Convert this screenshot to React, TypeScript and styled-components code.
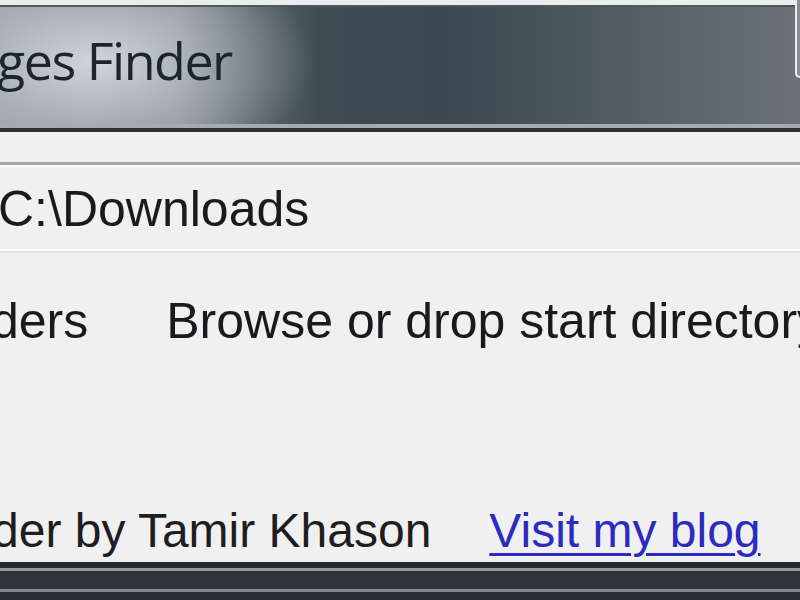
import styled, { createGlobalStyle } from 'styled-components';

const GlobalStyle = createGlobalStyle`
  html, body {
    margin: 0;
    padding: 0;
    background: #f0f0f0;
  }
`

const Window = styled.div`
  width: 800px;
  height: 600px;
  overflow: hidden;
  display: flex;
  flex-direction: column;
  background: #f0f0f0;
  font-family: "Liberation Sans", Arial, sans-serif;
  color: #1c1c1c;
`

const TopStrip = styled.div`
  height: 5px;
  background: #e9eded;
  border-bottom: 2px solid #4e585e;
`

// glass caption with the light glow behind the title
const TitleBar = styled.div`
  height: 117px;
  display: flex;
  justify-content: space-between;
  align-items: flex-start;
  background:
    radial-gradient(ellipse 220px 115px at 95px 55px, rgba(218, 224, 226, 0.85), rgba(186, 193, 197, 0.5) 55%, rgba(150, 158, 162, 0) 100%),
    linear-gradient(90deg, #959da2 0%, #8a9297 22%, #5a656c 32%, #404c54 40%, #3b4750 55%, #4f5a61 75%, #6b7378 100%);
  border-bottom: 4px solid #a5abae;
`

const TitleText = styled.h1`
  margin: 0;
  padding-top: 27px;
  margin-left: -3px;
  font-family: "Open Sans", "Noto Sans", sans-serif;
  font-weight: 400;
  font-size: 52px;
  letter-spacing: -1.5px;
  line-height: 1;
  color: #1b252b;
  white-space: nowrap;
`

const CaptionButton = styled.div`
  width: 3px;
  height: 76px;
  margin-top: -7px;
  border-left: 2px solid #e8eef0;
  border-bottom: 2px solid #e8eef0;
  border-bottom-left-radius: 8px;
  background: #848d92;
`

const TitleShadow = styled.div`
  height: 4px;
  background: #2b3236;
`

const Client = styled.div`
  flex: 1;
  display: flex;
  flex-direction: column;
  padding-top: 30px;
`

const PathBox = styled.div`
  border-top: 3px solid #a6a6a6;
  box-shadow: inset 0 2px 0 #ffffff, 0 2px 0 #e0e0e0;
  border-bottom: 2px solid #ffffff;
  padding: 19px 0 15px;
`

const BigText = styled.span<{ $offset?: number }>`
  display: block;
  margin-left: ${p => p.$offset ?? 0}px;
  font-size: 50px;
  line-height: 1;
  white-space: nowrap;
  color: #1a1a1e;
`

const OptionRow = styled.div`
  display: flex;
  gap: 78px;
  margin-top: 45px;
  white-space: nowrap;
`

const Footer = styled.div`
  margin-top: auto;
  display: flex;
  gap: 58px;
  padding-bottom: 7px;
  white-space: nowrap;
`

const FooterText = styled.span<{ $offset?: number }>`
  margin-left: ${p => p.$offset ?? 0}px;
  font-size: 48px;
  line-height: 1;
  color: #1e1e22;
`

const BlogLink = styled.a`
  font-size: 48px;
  line-height: 1;
  color: #2b2bbf;
  text-decoration: underline;
  text-decoration-thickness: 3px;
  text-underline-offset: 6px;
`

const BottomFrame = styled.div`
  height: 38px;
  background: linear-gradient(
    180deg,
    #25292c 0px,
    #25292c 6px,
    #8f979a 6px,
    #8f979a 9px,
    #2e3438 9px,
    #2e3438 27px,
    #818a8d 27px,
    #818a8d 30px,
    #272c30 30px
  );
`

export default function App() {
  return (
    <>
      <GlobalStyle />
      <Window>
        <TopStrip />
        <TitleBar>
          <TitleText>ges Finder</TitleText>
          <CaptionButton />
        </TitleBar>
        <TitleShadow />
        <Client>
          <PathBox>
            <BigText $offset={-2}>C:\Downloads</BigText>
          </PathBox>
          <OptionRow>
            <BigText $offset={-9}>ders</BigText>
            <BigText>Browse or drop start directory</BigText>
          </OptionRow>
          <Footer>
            <FooterText $offset={-8}>der by Tamir Khason</FooterText>
            <BlogLink href="#">Visit my blog</BlogLink>
          </Footer>
        </Client>
        <BottomFrame />
      </Window>
    </>
  )
}
